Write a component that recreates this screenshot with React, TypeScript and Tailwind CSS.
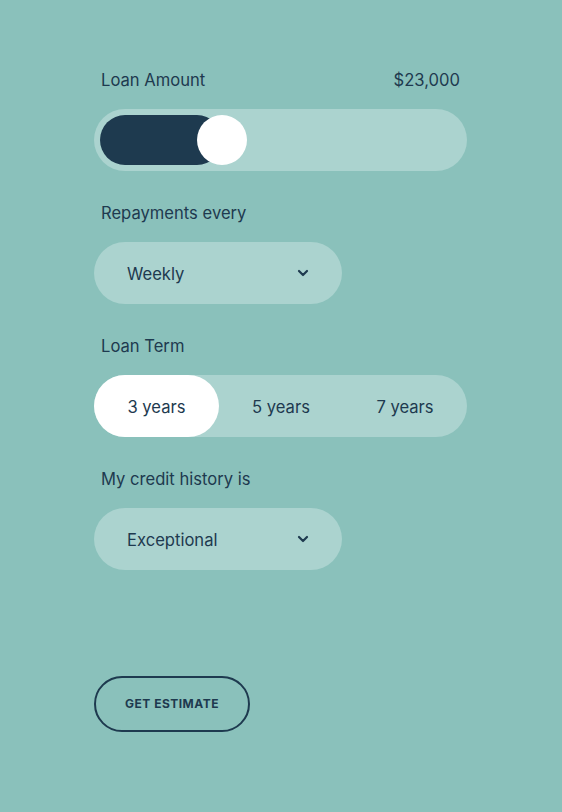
import React from "react";

const Chevron = () => (
  <svg width="12" height="8" viewBox="0 0 12 8" fill="none">
    <path d="M2 2l4 4 4-4" stroke="#1e3a4f" strokeWidth="2.2" strokeLinecap="round" strokeLinejoin="round" />
  </svg>
);

const Select = ({ value }: { value: string }) => (
  <div className="flex h-[62px] w-[248px] items-center justify-between rounded-full bg-[#abd3cf] pl-[33px] pr-[33px]">
    <span className="pt-[2px] text-[16.6px]">{value}</span>
    <Chevron />
  </div>
);

export default function App() {
  return (
    <div
      className="min-h-[812px] w-full bg-[#8ac1bb] text-[#1e3a4f]"
      style={{ fontFamily: "Inter, 'Noto Sans', sans-serif" }}
    >
      <div className="ml-[94px] flex w-[373px] flex-col pt-[67px]">
        <div className="flex h-6 items-center justify-between px-[7px] pt-[2px] text-[16.6px]">
          <span>Loan Amount</span>
          <span>$23,000</span>
        </div>
        <div className="mt-[18px] flex h-[62px] items-center rounded-full bg-[#abd3cf] px-[6px]">
          <div className="relative h-[50px] w-[147px]">
            <div className="h-[50px] w-[122px] rounded-full bg-[#1e3a4f]" />
            <div className="absolute right-0 top-0 h-[50px] w-[50px] rounded-full bg-white" />
          </div>
        </div>

        <div className="mt-[29px] flex h-6 items-center px-[7px] pt-[2px] text-[16.6px]">Repayments every</div>
        <div className="mt-[18px]">
          <Select value="Weekly" />
        </div>

        <div className="mt-[29px] flex h-6 items-center px-[7px] pt-[2px] text-[16.6px]">Loan Term</div>
        <div className="mt-[18px] grid h-[62px] grid-cols-[125px_124px_124px] rounded-full bg-[#abd3cf] text-[16.6px]">
          <div className="flex items-center justify-center rounded-full bg-white pt-[2px]">3 years</div>
          <div className="flex items-center justify-center pt-[2px]">5 years</div>
          <div className="flex items-center justify-center pt-[2px]">7 years</div>
        </div>

        <div className="mt-[29px] flex h-6 items-center px-[7px] pt-[2px] text-[16.6px]">My credit history is</div>
        <div className="mt-[18px]">
          <Select value="Exceptional" />
        </div>

        <button className="mt-[106px] flex h-[56px] w-[156px] items-center justify-center rounded-full border-2 border-[#1e3a4f] text-[12px] font-bold tracking-[0.04em]">
          GET ESTIMATE
        </button>
      </div>
    </div>
  );
}
